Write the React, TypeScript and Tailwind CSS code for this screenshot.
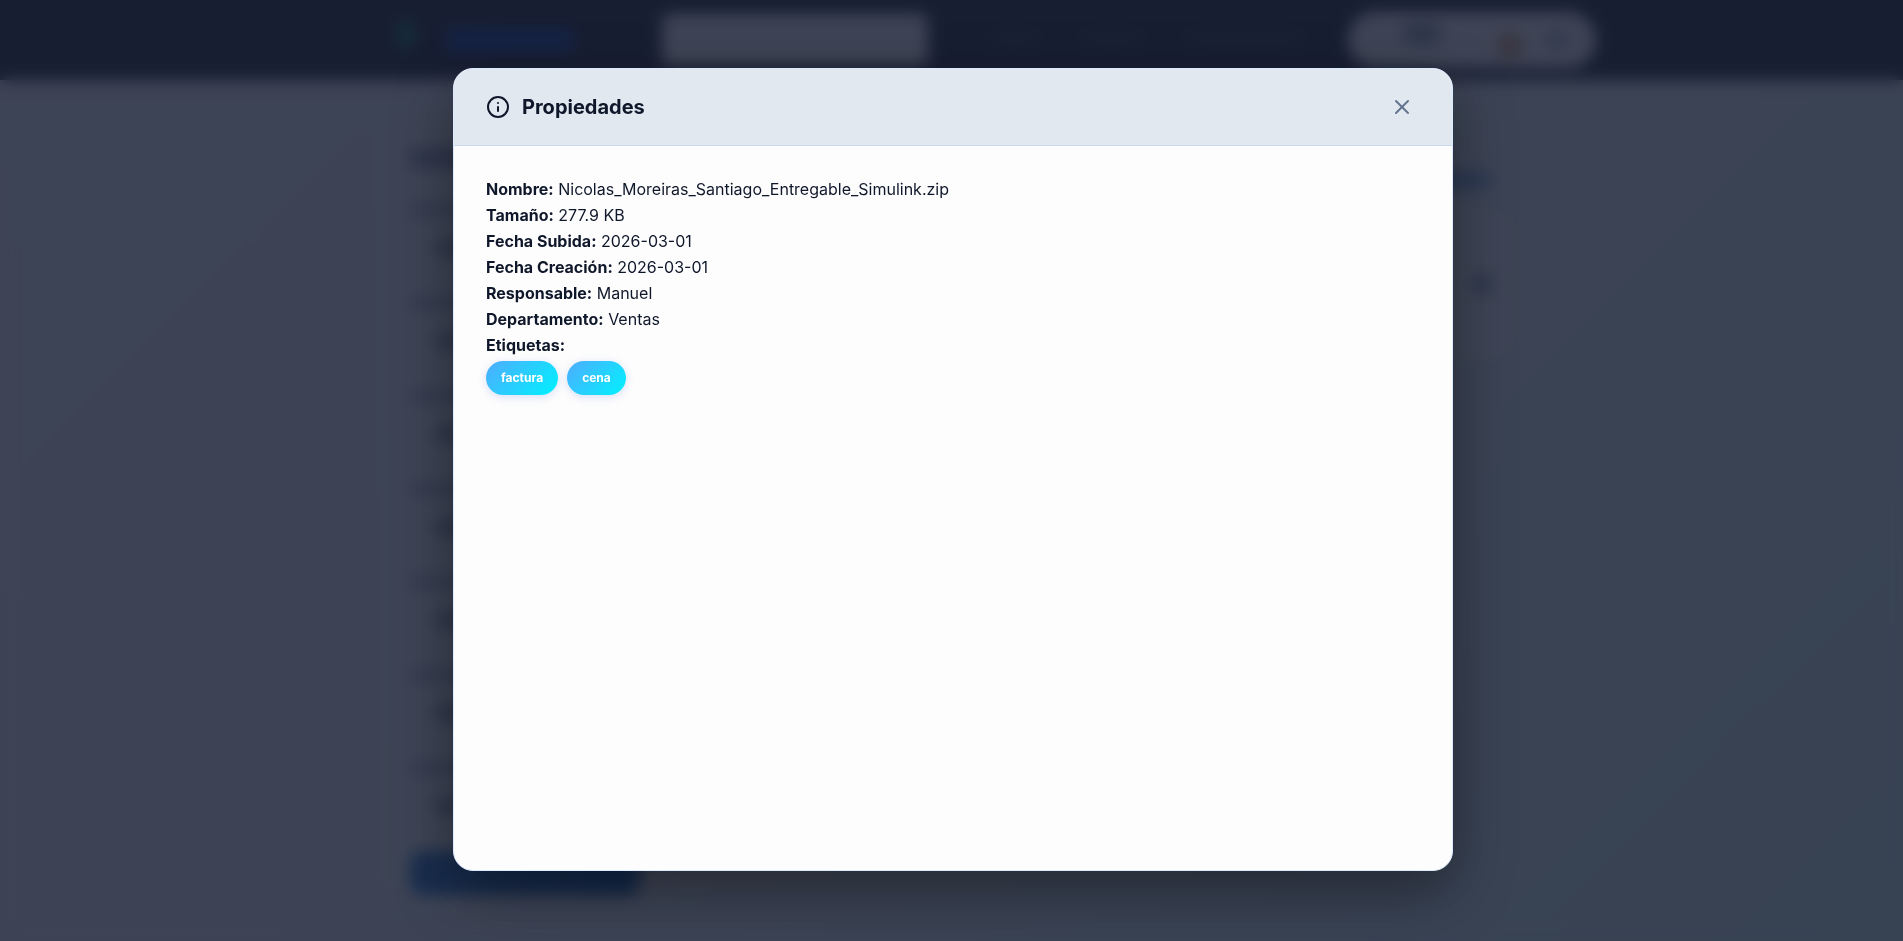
import { useState } from "react";
import { Info, X } from "lucide-react";

const details = [
  { label: "Nombre:", value: "Nicolas_Moreiras_Santiago_Entregable_Simulink.zip" },
  { label: "Tamaño:", value: "277.9 KB" },
  { label: "Fecha Subida:", value: "2026-03-01" },
  { label: "Fecha Creación:", value: "2026-03-01" },
  { label: "Responsable:", value: "Manuel" },
  { label: "Departamento:", value: "Ventas" },
];

const tags = ["factura", "cena"];

const filterFields = [1, 2, 3, 4, 5, 6, 7];

function TopBar() {
  return (
    <div className="h-20 bg-[#3b3d52]">
      <div className="mx-auto flex h-full max-w-[1288px] items-center pl-[90px]">
        <div className="mb-3 h-7 w-4 rounded-full bg-[#2f8f86]" />
        <div className="ml-8 h-6 w-32 rounded bg-[#2c55a8]" />
        <div className="ml-[88px] h-[52px] w-[266px] rounded-lg bg-slate-50" />
        <div className="ml-16 flex gap-12">
          <div className="h-3 w-11 rounded bg-[#484c64]" />
          <div className="h-3 w-14 rounded bg-[#484c64]" />
          <div className="h-3 w-28 rounded bg-[#484c64]" />
        </div>
        <div className="ml-auto flex h-14 w-[248px] items-center justify-between rounded-full bg-slate-50 pr-7 pl-14">
          <div className="mb-3 h-5 w-9 rounded bg-[#a3a9c0]" />
          <div className="mt-3 ml-8 h-6 w-6 rounded-full bg-[#d9a284]" />
          <div className="h-4 w-5 rounded bg-[#b4b8d0]" />
        </div>
      </div>
    </div>
  );
}

function FilterPanel() {
  return (
    <div className="w-[290px] rounded-3xl bg-slate-50 px-6 pt-10">
      <div className="mb-9 h-5 w-40 rounded bg-[#a8adc4]" />
      {filterFields.map((field) => (
        <div key={field} className="h-[93px]">
          <div className="h-3 w-32 rounded bg-[#bfc3d8]" />
          <div className="mt-6 ml-6 h-4 w-40 rounded bg-[#a8adbd]" />
        </div>
      ))}
      <div className="-mt-1 h-11 w-[230px] rounded-xl bg-linear-to-r from-[#3d86d6] to-[#2a70c4]" />
    </div>
  );
}

function ResultsPanel() {
  return (
    <div className="flex flex-1 flex-col items-end pt-16">
      <div className="mr-7 h-4 w-20 rounded bg-[#8fb2ea]" />
      <div className="mt-6 flex h-36 w-full items-center justify-end rounded-2xl bg-slate-50 pr-7">
        <div className="h-5 w-4 rounded bg-slate-400" />
      </div>
    </div>
  );
}

function Tag({ name }: { name: string }) {
  return (
    <span className="flex h-[34px] items-center rounded-full bg-linear-[135deg,#4facfe_0%,#00f2fe_100%] px-[15px] text-xs font-bold text-white shadow-[0_2px_8px_rgba(102,126,234,0.25)]">
      {name}
    </span>
  );
}

function PropertiesModal({ onClose }: { onClose: () => void }) {
  return (
    <div className="fixed inset-0 flex justify-center bg-[#0f172a]/80 pt-[68px] pb-[70px] pl-[3px] backdrop-blur-sm">
      <div
        role="dialog"
        aria-modal="true"
        aria-labelledby="properties-title"
        className="flex w-full max-w-[1000px] flex-col overflow-hidden rounded-[20px] border border-[#dbeafe] bg-[#fdfdfd] shadow-[0_20px_60px_rgba(0,0,0,0.4)]"
      >
        <header className="flex h-[77px] shrink-0 items-center justify-between border-b border-[#c7dbef] bg-[#e1e8f0] px-8">
          <h2 id="properties-title" className="flex items-center gap-3 text-xl font-bold">
            <Info size={24} />
            Propiedades
          </h2>
          <button
            type="button"
            aria-label="Cerrar"
            onClick={onClose}
            className="flex h-9 w-9 items-center justify-center rounded-lg text-slate-500"
          >
            <X size={24} />
          </button>
        </header>
        <div className="flex-1 overflow-y-auto px-8 pt-[30px] pb-8 text-base leading-[26px]">
          {details.map((detail) => (
            <p key={detail.label}>
              <strong className="font-bold">{detail.label}</strong> {detail.value}
            </p>
          ))}
          <p>
            <strong className="font-bold">Etiquetas:</strong>
          </p>
          <div className="mt-[3px] flex flex-wrap gap-[9px]">
            {tags.map((tag) => (
              <Tag key={tag} name={tag} />
            ))}
          </div>
        </div>
      </div>
    </div>
  );
}

export default function App() {
  const [open, setOpen] = useState(true);

  return (
    <div className="min-h-screen bg-linear-135 from-[#f5f7ff] via-[#f1f5f9] to-[#d5f0f5] font-['Inter',sans-serif] text-[#0f172a]">
      {/* Page behind the dialog */}
      <div aria-hidden="true">
        <TopBar />
        <div className="mx-auto flex max-w-[1132px] gap-8 pt-7 pb-3">
          <FilterPanel />
          <ResultsPanel />
        </div>
      </div>
      {open && <PropertiesModal onClose={() => setOpen(false)} />}
    </div>
  );
}
